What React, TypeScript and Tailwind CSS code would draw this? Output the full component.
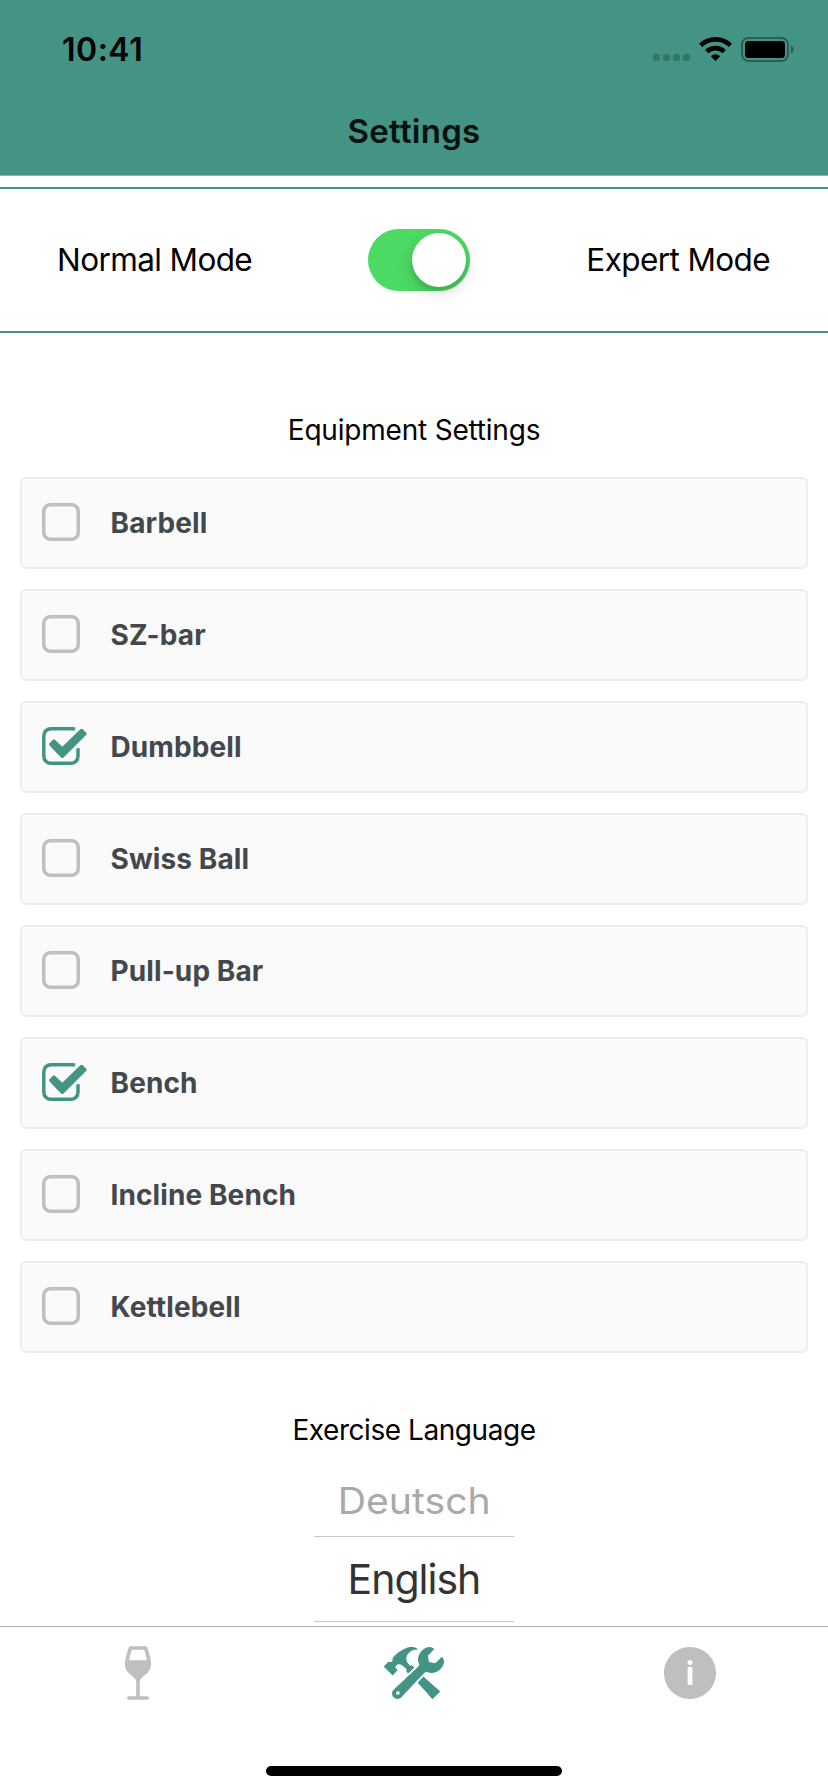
import { useState } from "react";
import { IoIosConstruct, IoIosInformationCircle, IoIosWine } from "react-icons/io";

const equipment = [
  { name: "Barbell", checked: false },
  { name: "SZ-bar", checked: false },
  { name: "Dumbbell", checked: true },
  { name: "Swiss Ball", checked: false },
  { name: "Pull-up Bar", checked: false },
  { name: "Bench", checked: true },
  { name: "Incline Bench", checked: false },
  { name: "Kettlebell", checked: false },
];

function CheckBox({ checked }: { checked: boolean }) {
  return (
    <svg className="block shrink-0" width="46" height="38" viewBox="0 0 46 38" fill="none">
      {checked ? (
        <>
          <path
            d="M33 2.3A7 7 0 0 0 30 1.7H8.8A7 7 0 0 0 1.8 8.7V29.2A7 7 0 0 0 8.8 36.2H29A7 7 0 0 0 36 29.2V21.3"
            stroke="#439484"
            strokeWidth="3.5"
          />
          <path
            d="M8.9 17.3L12 14.2L20.3 22.4L39.5 3.6L42.8 6.8L20.3 29.2Z"
            fill="#439484"
            stroke="#439484"
            strokeWidth="3.6"
            strokeLinejoin="round"
          />
        </>
      ) : (
        <rect x="1.75" y="1.75" width="34.5" height="34.5" rx="6.5" stroke="#bfbfbf" strokeWidth="3.5" />
      )}
    </svg>
  );
}

function StatusIcons() {
  return (
    <svg className="block" width="142" height="26" viewBox="0 0 142 26">
      <g fill="#357669">
        <rect x="0" y="17" width="7" height="7" rx="2" />
        <rect x="10" y="17" width="7" height="7" rx="2" />
        <rect x="20" y="17" width="7" height="7" rx="2" />
        <rect x="30" y="17" width="7" height="7" rx="2" />
      </g>
      <g fill="none" stroke="#000" strokeWidth="4.6">
        <path d="M47.6 8.4A21.4 21.4 0 0 1 77.4 8.4" />
        <path d="M53.7 14.7A12.7 12.7 0 0 1 71.3 14.7" />
      </g>
      <path d="M62.5 24L57.8 19.2A6.8 6.8 0 0 1 67.2 19.2Z" />
      <rect x="89" y="1" width="46" height="23" rx="6.5" fill="none" stroke="#2b5e54" strokeWidth="2" />
      <rect x="92" y="4" width="40" height="17" rx="3.5" />
      <path d="M138 8.5A4.4 4.4 0 0 1 138 16.5Z" fill="#2b5e54" />
    </svg>
  );
}

function ModeSwitch() {
  const [on, setOn] = useState(true);
  return (
    <button
      role="switch"
      aria-checked={on}
      aria-label="Expert Mode"
      onClick={() => setOn(!on)}
      className={`flex h-[62px] w-[102px] items-center rounded-full px-1 ${on ? "justify-end bg-[#4cd964]" : "justify-start bg-[#e5e5ea]"}`}
    >
      <span className="size-[54px] rounded-full bg-white shadow-[0_6px_16px_rgba(0,0,0,0.15),0_4px_4px_rgba(0,0,0,0.10)]" />
    </button>
  );
}

export default function App() {
  return (
    <div className="flex h-[1792px] w-[828px] flex-col overflow-hidden bg-white font-[Inter,'Liberation_Sans',sans-serif] text-black">
      <header className="flex h-[176px] shrink-0 flex-col border-b border-[#a3aaa8] bg-[#439484]">
        <div className="flex h-[88px] items-start justify-between pt-[37px] pr-[33px] pl-[62px]">
          <span className="mt-[-3px] text-[32px] leading-[32px] font-semibold tracking-[0.5px]">10:41</span>
          <StatusIcons />
        </div>
        <h1 className="pt-[23px] text-center text-[33px] leading-[40px] font-semibold tracking-[0.25px] text-[#07110f]">Settings</h1>
      </header>

      <section className="mt-[11px] flex h-[146px] shrink-0 items-center justify-between border-y-2 border-[#439484] pr-[58px] pb-px pl-[57px] text-[31.5px] leading-[40px] tracking-[-0.6px]">
        <span className="w-[200px]">Normal Mode</span>
        <div className="ml-[11px]">
          <ModeSwitch />
        </div>
        <span className="w-[200px] text-right">Expert Mode</span>
      </section>

      <main className="flex min-h-0 flex-1 flex-col overflow-hidden">
        <h2 className="mt-[79px] text-center text-[28px] leading-[36px] tracking-[-0.2px]">Equipment Settings</h2>
        <ul className="mx-5 mt-[29px] flex flex-col gap-5">
          {equipment.map((item) => (
            <li key={item.name} className="flex h-[92px] items-center gap-[22.5px] rounded-[6px] border-2 border-[#ededed] bg-[#fafafa] pl-5">
              <div className="mb-[2px]">
                <CheckBox checked={item.checked} />
              </div>
              <span className="text-[28px] leading-[36px] font-bold tracking-[0.1px] text-[#43484d]">{item.name}</span>
            </li>
          ))}
        </ul>
        <h2 className="mt-[59px] text-center text-[28px] leading-[36px] tracking-[-0.45px]">Exercise Language</h2>
        <div className="mx-auto mt-[25px] flex w-[200px] flex-col items-center">
          <span className="flex h-[63px] scale-x-[1.06] items-center pb-[8px] text-[37px] leading-[44px] text-[#a9a9a9]">Deutsch</span>
          <div className="flex h-[86px] w-full items-center justify-center border-y border-[#c8c8c8]">
            <span className="text-[41px] leading-[48px] tracking-[-1px] text-[#333333]">English</span>
          </div>
        </div>
      </main>

      <nav className="flex h-[166px] shrink-0 flex-col items-center justify-between border-t border-[#b2b2b2] bg-white pb-4">
        <div className="grid w-full grid-cols-3 justify-items-center pt-[14px]">
          <IoIosWine size={64} color="#bfbfbf" />
          <IoIosConstruct size={64} color="#439484" />
          <IoIosInformationCircle size={64} color="#bfbfbf" />
        </div>
        <div className="h-[10px] w-[296px] rounded-full bg-black" />
      </nav>
    </div>
  );
}
